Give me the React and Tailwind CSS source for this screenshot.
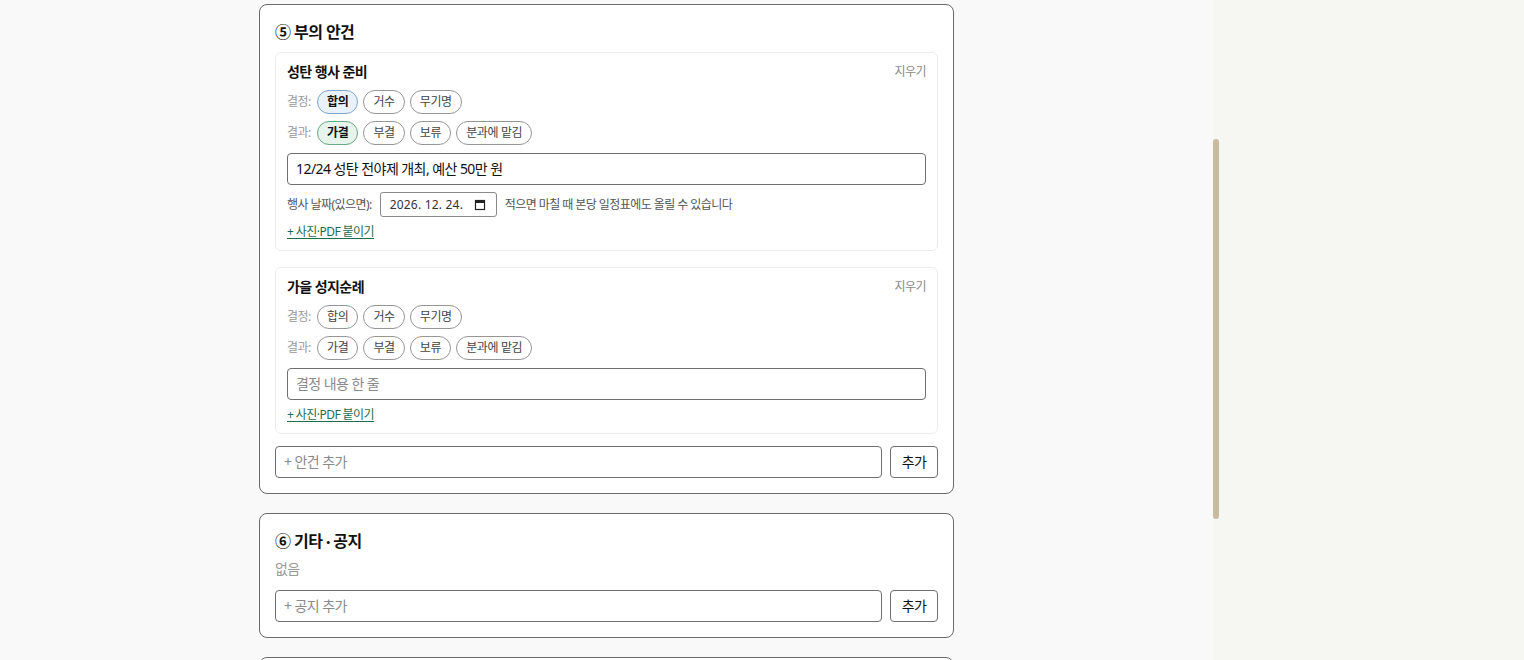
import React from "react";

const FONT = {
  fontFamily: '"Noto Sans", "Noto Sans CJK KR", sans-serif',
  letterSpacing: "-0.035em",
};

function Chip({ children, active }) {
  let cls =
    "h-6 px-[9px] rounded-full border text-xs leading-none tracking-[-0.03em] flex items-center justify-center ";
  if (active === "blue") cls += "bg-[#e9f1fa] border-[#7ea6cc] font-bold text-[#111]";
  else if (active === "green") cls += "bg-[#e6f4ec] border-[#6aa886] font-bold text-[#111]";
  else cls += "bg-white border-[#969696] text-[#444]";
  return <div className={cls}>{children}</div>;
}

function ChipRow({ label, items, active, activeColor, className }) {
  return (
    <div className={"flex items-center gap-[5px] " + (className || "")}>
      <span className="text-xs text-[#9a9a9a] w-6 mr-[1px] whitespace-nowrap">{label}</span>
      {items.map((it) => (
        <Chip key={it} active={it === active ? activeColor : null}>
          {it}
        </Chip>
      ))}
    </div>
  );
}

function CalendarIcon() {
  return (
    <svg width="12" height="12" viewBox="0 0 12 12" fill="none">
      <rect x="1.5" y="1.5" width="9" height="9" stroke="#222" strokeWidth="1.2" />
      <rect x="1.5" y="1.5" width="9" height="2.5" fill="#222" />
    </svg>
  );
}

function AgendaItem({ title, decision, result, value, placeholder, date }) {
  return (
    <div className="border border-[#ececec] rounded-md bg-white px-[11px] pt-[9px] pb-[10px]">
      <div className="flex items-center justify-between h-5">
        <span className="text-sm font-bold text-[#111]">{title}</span>
        <span className="text-xs text-[#8a8a8a]">지우기</span>
      </div>
      <ChipRow
        className="mt-2"
        label="결정:"
        items={["합의", "거수", "무기명"]}
        active={decision}
        activeColor="blue"
      />
      <ChipRow
        className="mt-[7px]"
        label="결과:"
        items={["가결", "부결", "보류", "분과에 맡김"]}
        active={result}
        activeColor="green"
      />
      <div className="mt-2 h-8 border border-[#6f6f6f] rounded-[4px] flex items-center px-2 text-sm">
        {value ? (
          <span className="text-[#111]">{value}</span>
        ) : (
          <span className="text-[#8a8a8a]">{placeholder}</span>
        )}
      </div>
      {date && (
        <div className="mt-[7px] h-[25px] flex items-center gap-2">
          <span className="text-xs text-[#555]">행사 날짜(있으면):</span>
          <div className="h-[25px] w-[117px] border border-[#8a8a8a] rounded-[3px] flex items-center justify-between pl-[9px] pr-[10px] text-xs text-[#333]">
            <span className="tracking-[0.2px]">2026. 12. 24.</span>
            <CalendarIcon />
          </div>
          <span className="text-xs text-[#555]">적으면 마칠 때 본당 일정표에도 올릴 수 있습니다</span>
        </div>
      )}
      <div className="mt-[7px] h-4 flex items-center">
        <span className="text-xs text-[#1f6b4f] underline underline-offset-2">+ 사진·PDF 붙이기</span>
      </div>
    </div>
  );
}

function AddRow({ placeholder }) {
  return (
    <div className="flex gap-2">
      <div className="flex-1 h-8 border border-[#6f6f6f] rounded-[4px] flex items-center px-2 text-sm text-[#8a8a8a] bg-white">
        {placeholder}
      </div>
      <div className="w-12 h-8 border border-[#6f6f6f] rounded-[4px] flex items-center justify-center text-sm text-[#111] bg-white">
        추가
      </div>
    </div>
  );
}

export default function App() {
  return (
    <div style={FONT} className="h-[660px] w-[1524px] overflow-hidden flex bg-[#f9f9f9]">
      <div className="w-[1213px] flex flex-col items-center pt-1">
        <div className="w-[695px] border border-[#6b6b6b] rounded-lg bg-white p-[15px] shrink-0">
          <div className="text-base font-bold leading-6 text-[#111] mb-2">⑤ 부의 안건</div>
          <div className="flex flex-col gap-4">
            <AgendaItem
              title="성탄 행사 준비"
              decision="합의"
              result="가결"
              value="12/24 성탄 전야제 개최, 예산 50만 원"
              date
            />
            <AgendaItem title="가을 성지순례" placeholder="결정 내용 한 줄" />
          </div>
          <div className="mt-3">
            <AddRow placeholder="+ 안건 추가" />
          </div>
        </div>
        <div className="mt-[19px] w-[695px] border border-[#6b6b6b] rounded-lg bg-white p-[15px] shrink-0">
          <div className="h-6 flex items-center text-base font-bold text-[#111] whitespace-pre">
            <span>⑥ 기타</span>
            <span className="font-['Noto_Sans_CJK_KR'] px-[1px] leading-none">·</span>
            <span>공지</span>
          </div>
          <div className="mt-[6px] text-sm leading-5 text-[#9a9a9a]">없음</div>
          <div className="mt-[11px]">
            <AddRow placeholder="+ 공지 추가" />
          </div>
        </div>
        <div className="mt-[19px] w-[695px] h-[60px] border border-[#6b6b6b] rounded-lg bg-white shrink-0"></div>
      </div>
      <div className="w-2 bg-[#f6f7f3] pt-[139px]">
        <div className="w-1.5 h-[380px] rounded-full bg-[#c8bca0]"></div>
      </div>
      <div className="flex-1 bg-[#f6f7f3]"></div>
    </div>
  );
}
